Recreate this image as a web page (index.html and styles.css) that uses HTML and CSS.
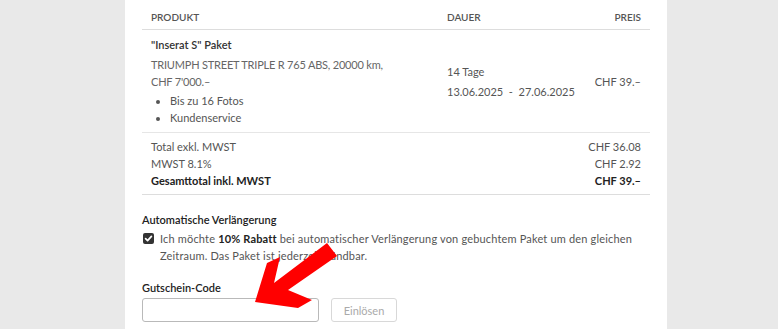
FILE: index.html
```html
<!DOCTYPE html>
<html lang="de">
<head>
<meta charset="utf-8">
<link rel="stylesheet" href="styles.css">
</head>
<body>
<div class="panel">
  <table class="order">
    <colgroup><col class="c1"><col class="c2"><col class="c3"></colgroup>
    <thead>
      <tr><th>Produkt</th><th>Dauer</th><th class="r">Preis</th></tr>
    </thead>
    <tbody>
      <tr class="item">
        <td>
          <div class="title">"Inserat S" Paket</div>
          <div class="desc">TRIUMPH STREET TRIPLE R 765 ABS, 20000 km,<br>CHF 7'000.–</div>
          <ul class="feats">
            <li>Bis zu 16 Fotos</li>
            <li>Kundenservice</li>
          </ul>
        </td>
        <td class="dur">
          <div>14 Tage</div>
          <div>13.06.2025&nbsp; -&nbsp; 27.06.2025</div>
        </td>
        <td class="r price">CHF 39.–</td>
      </tr>
      <tr class="totals">
        <td colspan="2">
          <div>Total exkl. MWST</div>
          <div>MWST 8.1%</div>
          <div class="b">Gesamttotal inkl. MWST</div>
        </td>
        <td class="r">
          <div>CHF 36.08</div>
          <div>CHF 2.92</div>
          <div class="b">CHF 39.–</div>
        </td>
      </tr>
    </tbody>
  </table>

  <h3 class="sub">Automatische Verlängerung</h3>
  <label class="check">
    <span class="box"><svg width="11" height="11" viewBox="0 0 11 11"><path d="M2.6 5.6 L4.6 7.6 L8.4 3.4" fill="none" stroke="#fff" stroke-width="1.7" stroke-linecap="round" stroke-linejoin="round"/></svg></span>
    <span class="ctext">Ich möchte <b>10% Rabatt</b> bei automatischer Verlängerung von gebuchtem Paket um den gleichen Zeitraum. Das Paket ist jederzeit kündbar.</span>
  </label>

  <h3 class="sub coupon-label">Gutschein-Code</h3>
  <div class="coupon">
    <input class="code" type="text">
    <button class="redeem" disabled>Einlösen</button>
  </div>

  <svg class="arrow" width="778" height="329" viewBox="0 0 778 329">
    <polygon points="255,302 267,263 280,257 274,283 327,243 337,256 288,290 312,300 298,308" fill="#ff0000"/>
  </svg>
</div>
</body>
</html>
```

FILE: styles.css
```css
html, body {
  margin: 0;
  padding: 0;
}
body {
  background: #e9e9e9;
  font-family: Lato, "Open Sans", sans-serif;
  font-size: 11px;
  line-height: 17px;
  color: #555;
  height: 329px;
  overflow: hidden;
}
.panel {
  margin-left: 125px;
  width: 542px;
  height: 329px;
  padding: 0 17px;
  box-sizing: border-box;
  background: #fff;
  overflow: hidden;
}
.order {
  width: 508px;
  border-collapse: collapse;
  table-layout: fixed;
}
.c1 { width: 296px; }
.c2 { width: 140px; }
.order th {
  font-size: 10px;
  font-weight: 600;
  text-transform: uppercase;
  color: #555;
  text-align: left;
  line-height: 14px;
  padding: 10px 9px 5px;
  border-bottom: 1px solid #ddd;
}
.order td {
  padding: 6px 9px 6px;
  vertical-align: middle;
}
.order .r { text-align: right; }
.item td { border-bottom: 1px solid #e6e6e6; }
.title {
  font-weight: 600;
  color: #333;
  margin-bottom: 3px;
}
.desc {
  color: #666;
  letter-spacing: -0.2px;
}
.feats {
  margin: 2px 0 0;
  padding-left: 19px;
  color: #555;
}
.dur {
  color: #555;
  white-space: nowrap;
}
.dur div + div { margin-top: 3px; }
.price { color: #555; }
.totals td {
  padding: 5px 9px 5px;
  border-bottom: 1px solid #ddd;
  color: #555;
}
.totals .b {
  font-weight: 700;
  color: #222;
}
.sub {
  margin: 16px 0 2px;
  font-size: 11px;
  font-weight: 600;
  line-height: 17px;
  color: #222;
}
.check {
  display: flex;
  align-items: flex-start;
  gap: 6px;
  color: #555;
}
.box {
  flex: none;
  width: 11px;
  height: 11px;
  margin: 3px 0 0 1px;
  background: #333;
  border-radius: 2px;
  display: flex;
}
.ctext {
  letter-spacing: 0.17px;
}
.ctext b { color: #222; font-weight: 700; }
.coupon-label { margin-top: 15px; }
.coupon {
  display: flex;
  gap: 12px;
  margin-top: 1px;
}
.code {
  width: 177px;
  height: 24px;
  box-sizing: border-box;
  border: 1px solid #b9b9b9;
  border-radius: 3px;
  background: #fff;
  margin: 0;
}
.redeem {
  width: 66px;
  height: 24px;
  box-sizing: border-box;
  border: 1px solid #d8d8d8;
  border-radius: 3px;
  background: #fff;
  color: #aaa;
  font-family: Lato, sans-serif;
  font-size: 11px;
  padding: 0;
}
.arrow {
  position: absolute;
  left: 0;
  top: 0;
  pointer-events: none;
}
```
